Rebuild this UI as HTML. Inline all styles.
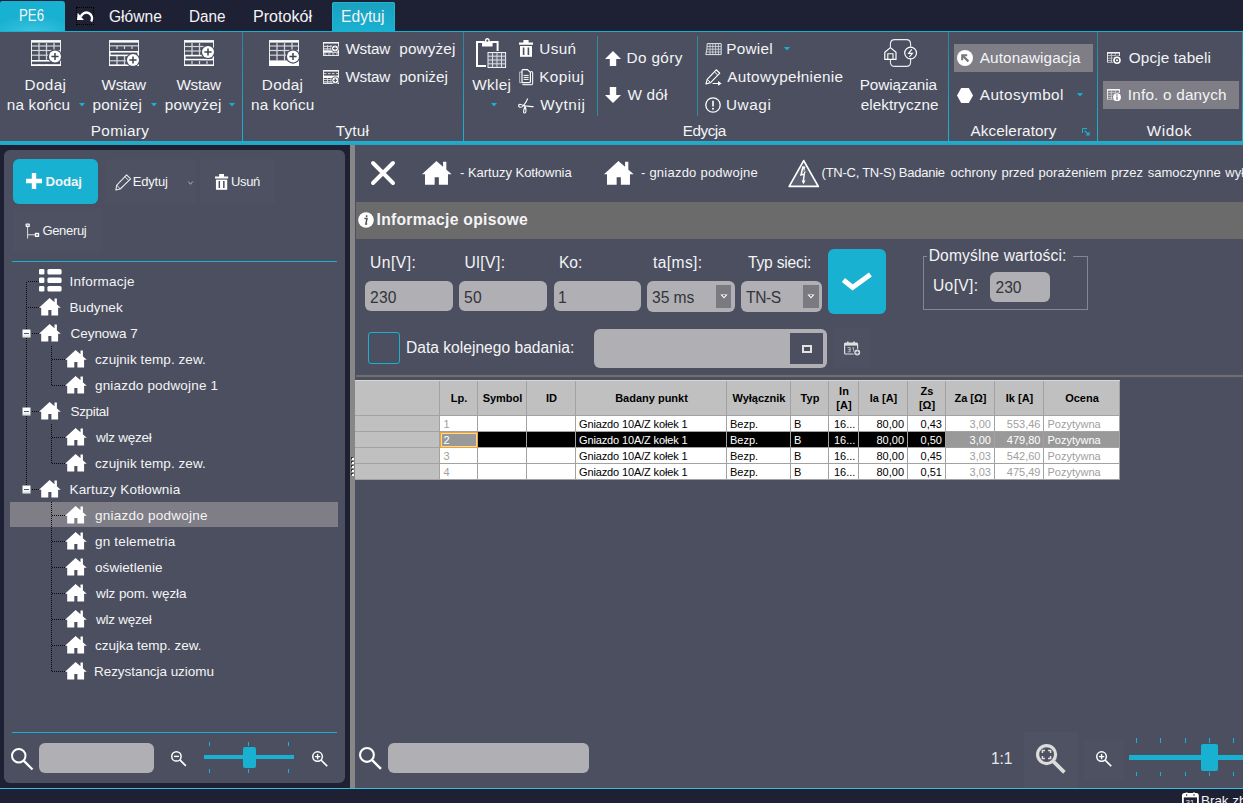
<!DOCTYPE html>
<html lang="pl"><head><meta charset="utf-8"><title>PE6</title>
<style>
html,body{margin:0;padding:0;background:#1d2133;}
body{width:1243px;height:803px;overflow:hidden;font-family:"Liberation Sans",sans-serif;}
#app{position:relative;width:1243px;height:803px;overflow:hidden;background:#1d2133;}
#app div,#app span.t,#app svg{position:absolute;}
#app svg{overflow:visible;}
span.t{white-space:pre;line-height:1;}

</style></head>
<body>
<div id="app">
<div style="left:0;top:1px;width:65px;height:31px;border-radius:2px 3px 0 0;background:radial-gradient(ellipse 40px 16px at 50% 100%,#3cc3df 0%,#19b1d1 100%);"></div>
<span class="t" style="left:19.26px;top:8px;font-size:15.7px;color:#f4f4f6;transform:scaleX(0.8434);transform-origin:0 0;">PE6</span>
<div style="left:76px;top:7px;width:16px;height:16px;border:1px dotted #000;"></div>
<svg style="left:76px;top:10px" width="18" height="12" viewBox="0 0 18 12"><path d="M15.2 11.5 A5.8 5.8 0 1 0 4.8 6.6" fill="none" stroke="#fff" stroke-width="2.4"/><path d="M1.7 2.8 L1 10.1 L7.9 10.1 Z" fill="#fff"/></svg>
<span class="t" style="left:108.8px;top:9px;font-size:15.8px;color:#f4f4f6;transform:scaleX(0.9856);transform-origin:0 0;">Główne</span>
<span class="t" style="left:189.03px;top:9px;font-size:15.8px;color:#f4f4f6;transform:scaleX(0.9681);transform-origin:0 0;">Dane</span>
<span class="t" style="left:252.98px;top:9px;font-size:15.8px;color:#f4f4f6;transform:scaleX(1.0184);transform-origin:0 0;">Protokół</span>
<div style="left:332px;top:2px;width:63px;height:30px;border-radius:2.5px 2.5px 0 0;background:linear-gradient(#1b9fbe,#1aa9c9 50%,#19b1d1);box-shadow:inset 1px 1px 0 #22b4d3,inset -1px 0 0 #22b4d3;"></div>
<span class="t" style="left:340.81px;top:9px;font-size:15.8px;color:#f4f4f6;transform:scaleX(0.9906);transform-origin:0 0;">Edytuj</span>
<div style="left:0px;top:31px;width:1243px;height:1px;background:#19b1d1;"></div>
<div style="left:0px;top:32px;width:1243px;height:109px;background:#4b4f5f;"></div>
<div style="left:0px;top:141px;width:1243px;height:4px;background:linear-gradient(#1ab3d4,#2a9fba);"></div>
<div style="left:242px;top:32px;width:1px;height:109px;background:linear-gradient(#2b849d,#19b1d1 95%);"></div>
<div style="left:463px;top:32px;width:1px;height:109px;background:linear-gradient(#2b849d,#19b1d1 95%);"></div>
<div style="left:948px;top:32px;width:1px;height:109px;background:linear-gradient(#2b849d,#19b1d1 95%);"></div>
<div style="left:1097px;top:32px;width:1px;height:109px;background:linear-gradient(#2b849d,#19b1d1 95%);"></div>
<div style="left:1242px;top:32px;width:1px;height:109px;background:linear-gradient(#2b849d,#19b1d1 95%);"></div>
<div style="left:597px;top:36px;width:1px;height:80px;background:#2f8ba3;"></div>
<div style="left:697px;top:36px;width:1px;height:80px;background:#2f8ba3;"></div>
<svg style="left:31px;top:40px" width="30" height="26" viewBox="0 0 30 26"><rect x="0" y="0" width="30" height="2.6" fill="#fff"/><rect x="0.5" y="0.5" width="29" height="25" fill="none" stroke="#eee" stroke-width="1"/><path d="M8 3 V20.5" stroke="#d4d5da" stroke-width="1.3"/><path d="M15.5 3 V20.5" stroke="#d4d5da" stroke-width="1.3"/><path d="M23 3 V20.5" stroke="#d4d5da" stroke-width="1.3"/><path d="M1 6 H29" stroke="#d4d5da" stroke-width="1.2"/><path d="M1 10.5 H29" stroke="#d4d5da" stroke-width="1.2"/><path d="M1 15.2 H29" stroke="#d4d5da" stroke-width="1.2"/><rect x="0" y="20" width="30" height="1.6" fill="#fff"/><rect x="0" y="24.2" width="30" height="1.8" fill="#fff"/><path d="M8 24 V26" stroke="#fff" stroke-width="1"/><path d="M15.5 24 V26" stroke="#fff" stroke-width="1"/><circle cx="24" cy="16.5" r="7.2" fill="#4b4f5f"/><circle cx="24" cy="16.5" r="6" fill="#fff"/><path d="M20.4 16.5 H27.6 M24 12.9 V20.1" stroke="#3f4352" stroke-width="1.5"/></svg>
<span class="t" style="left:24.6px;top:77px;font-size:15.3px;color:#f4f4f6;letter-spacing:0.357px;">Dodaj</span>
<span class="t" style="left:6.8px;top:96.6px;font-size:15.3px;color:#f4f4f6;letter-spacing:0.173px;">na końcu</span>
<svg style="left:79px;top:103px" width="6" height="4" viewBox="0 0 6 4"><path d="M0 0 H6 L3 3.4 Z" fill="#19b1d1"/></svg>
<svg style="left:109px;top:40px" width="30" height="26" viewBox="0 0 30 26"><rect x="0" y="0" width="30" height="2.6" fill="#fff"/><rect x="0.5" y="0.5" width="29" height="25" fill="none" stroke="#eee" stroke-width="1"/><path d="M1 5.8 H29" stroke="#d4d5da" stroke-width="1.2"/><path d="M8 6 V9" stroke="#d4d5da" stroke-width="1.2"/><path d="M15.5 6 V9" stroke="#d4d5da" stroke-width="1.2"/><path d="M23 6 V9" stroke="#d4d5da" stroke-width="1.2"/><rect x="0.8" y="11.8" width="28.4" height="3.6" fill="none" stroke="#fff" stroke-width="1.6"/><path d="M8 16 V25" stroke="#d4d5da" stroke-width="1.3"/><path d="M15.5 16 V25" stroke="#d4d5da" stroke-width="1.3"/><path d="M1 20.8 H20" stroke="#d4d5da" stroke-width="1.2"/><rect x="0" y="24.4" width="30" height="1.6" fill="#fff"/><circle cx="24" cy="20" r="7.2" fill="#4b4f5f"/><circle cx="24" cy="20" r="6" fill="#fff"/><path d="M20.4 20 H27.6 M24 16.4 V23.6" stroke="#3f4352" stroke-width="1.5"/></svg>
<span class="t" style="left:101.6px;top:77px;font-size:15.3px;color:#f4f4f6;letter-spacing:-0.365px;">Wstaw</span>
<span class="t" style="left:92.5px;top:96.6px;font-size:15.3px;color:#f4f4f6;letter-spacing:0.152px;">poniżej</span>
<svg style="left:151px;top:103px" width="6" height="4" viewBox="0 0 6 4"><path d="M0 0 H6 L3 3.4 Z" fill="#19b1d1"/></svg>
<svg style="left:184px;top:40px" width="30" height="26" viewBox="0 0 30 26"><rect x="0" y="0" width="30" height="2.6" fill="#fff"/><rect x="0.5" y="0.5" width="29" height="25" fill="none" stroke="#eee" stroke-width="1"/><path d="M8 3 V15" stroke="#d4d5da" stroke-width="1.3"/><path d="M15.5 3 V15" stroke="#d4d5da" stroke-width="1.3"/><path d="M1 6.5 H20" stroke="#d4d5da" stroke-width="1.2"/><path d="M1 11 H20" stroke="#d4d5da" stroke-width="1.2"/><rect x="0.8" y="15.6" width="28.4" height="4" fill="none" stroke="#fff" stroke-width="1.6"/><path d="M8 21 V24" stroke="#d4d5da" stroke-width="1.2"/><path d="M15.5 21 V24" stroke="#d4d5da" stroke-width="1.2"/><path d="M23 21 V24" stroke="#d4d5da" stroke-width="1.2"/><rect x="0" y="24.4" width="30" height="1.6" fill="#fff"/><circle cx="24" cy="12" r="7.2" fill="#4b4f5f"/><circle cx="24" cy="12" r="6" fill="#fff"/><path d="M20.4 12 H27.6 M24 8.4 V15.6" stroke="#3f4352" stroke-width="1.5"/></svg>
<span class="t" style="left:176.5px;top:77px;font-size:15.3px;color:#f4f4f6;letter-spacing:-0.34px;">Wstaw</span>
<span class="t" style="left:164.8px;top:96.6px;font-size:15.3px;color:#f4f4f6;letter-spacing:0.222px;">powyżej</span>
<svg style="left:229px;top:103px" width="6" height="4" viewBox="0 0 6 4"><path d="M0 0 H6 L3 3.4 Z" fill="#19b1d1"/></svg>
<span class="t" style="left:90.8px;top:123px;font-size:15.3px;color:#f4f4f6;letter-spacing:0.34px;">Pomiary</span>
<svg style="left:268.5px;top:40px" width="30" height="26" viewBox="0 0 30 26"><rect x="0" y="0" width="30" height="2.6" fill="#fff"/><rect x="0.5" y="0.5" width="29" height="25" fill="none" stroke="#eee" stroke-width="1"/><path d="M8 3 V20.5" stroke="#d4d5da" stroke-width="1.3"/><path d="M15.5 3 V20.5" stroke="#d4d5da" stroke-width="1.3"/><path d="M23 3 V20.5" stroke="#d4d5da" stroke-width="1.3"/><path d="M1 6 H29" stroke="#d4d5da" stroke-width="1.2"/><path d="M1 10.5 H29" stroke="#d4d5da" stroke-width="1.2"/><path d="M1 15.2 H29" stroke="#d4d5da" stroke-width="1.2"/><rect x="0" y="20.4" width="30" height="5.6" fill="#fff"/><circle cx="24" cy="16.5" r="7.2" fill="#4b4f5f"/><circle cx="24" cy="16.5" r="6" fill="#fff"/><path d="M20.4 16.5 H27.6 M24 12.9 V20.1" stroke="#3f4352" stroke-width="1.5"/></svg>
<span class="t" style="left:261.8px;top:77px;font-size:15.3px;color:#f4f4f6;letter-spacing:0.307px;">Dodaj</span>
<span class="t" style="left:251px;top:96.6px;font-size:15.3px;color:#f4f4f6;letter-spacing:0.159px;">na końcu</span>
<svg style="left:323px;top:42px" width="16" height="14" viewBox="0 0 16 14"><rect x="0.5" y="0.5" width="15" height="13" fill="none" stroke="#e8e8ea" stroke-width="1"/><rect x="0" y="0" width="16" height="1.6" fill="#f4f4f4"/><path d="M1 4.3 H10 M1 6.8 H10" stroke="#d4d5da" stroke-width="1.2"/><path d="M4.5 3 V8 M8 3 V8" stroke="#d4d5da" stroke-width="0.9"/><rect x="0" y="8.3" width="16" height="2.4" fill="#fff"/><path d="M1 12 H15" stroke="#d4d5da" stroke-width="1" stroke-dasharray="2.5 1.5"/><circle cx="12" cy="6.4" r="3.7" fill="#4b4f5f"/><circle cx="12" cy="6.4" r="3" fill="#fff"/><path d="M10.1 6.4 H13.9 M12 4.5 V8.3" stroke="#3f4352" stroke-width="1"/></svg>
<span class="t" style="left:345.4px;top:41.2px;font-size:15.3px;color:#f4f4f6;letter-spacing:-0.265px;">Wstaw</span>
<span class="t" style="left:399.3px;top:41.2px;font-size:15.3px;color:#f4f4f6;letter-spacing:0.139px;">powyżej</span>
<svg style="left:323px;top:70px" width="16" height="14" viewBox="0 0 16 14"><rect x="0.5" y="0.5" width="15" height="13" fill="none" stroke="#e8e8ea" stroke-width="1"/><rect x="0" y="0" width="16" height="1.6" fill="#f4f4f4"/><path d="M1 3.6 H15" stroke="#d4d5da" stroke-width="1" stroke-dasharray="2.5 1.5"/><rect x="0" y="5.6" width="16" height="2.4" fill="#fff"/><path d="M1 9.5 H10 M1 11.8 H10" stroke="#d4d5da" stroke-width="1.2"/><path d="M4.5 8 V13 M8 8 V13" stroke="#d4d5da" stroke-width="0.9"/><circle cx="12.3" cy="10.3" r="3.7" fill="#4b4f5f"/><circle cx="12.3" cy="10.3" r="3" fill="#fff"/><path d="M10.4 10.3 H14.200000000000001 M12.3 8.4 V12.200000000000001" stroke="#3f4352" stroke-width="1"/></svg>
<span class="t" style="left:345.4px;top:69.4px;font-size:15.3px;color:#f4f4f6;letter-spacing:-0.265px;">Wstaw</span>
<span class="t" style="left:399.3px;top:69.4px;font-size:15.3px;color:#f4f4f6;letter-spacing:0.036px;">poniżej</span>
<span class="t" style="left:335.8px;top:123px;font-size:15.3px;color:#f4f4f6;letter-spacing:0.196px;">Tytuł</span>
<svg style="left:476px;top:37px" width="31" height="31" viewBox="0 0 31 31">
<path d="M8 5 H1 V29 H10" fill="none" stroke="#fff" stroke-width="2"/>
<path d="M15 5 H21.6 V14" fill="none" stroke="#fff" stroke-width="2"/>
<path d="M6 4.2 H9 A2.4 2.4 0 1 1 13.6 4.2 H16.6 V9.4 H6 Z" fill="#fff"/><circle cx="11.3" cy="3.6" r="1.1" fill="#4b4f5f"/>
<rect x="12" y="15.5" width="17.6" height="15" fill="#63677a" stroke="#f2f2f2" stroke-width="1"/>
<path d="M16.5 15.5 V30.5 M21 15.5 V30.5 M25.5 15.5 V30.5 M12 19.2 H30 M12 23 H30 M12 26.8 H30" stroke="#dcdde2" stroke-width="1"/>
</svg>
<span class="t" style="left:472.2px;top:77px;font-size:15.3px;color:#f4f4f6;letter-spacing:0.348px;">Wklej</span>
<svg style="left:491px;top:103px" width="6" height="4" viewBox="0 0 6 4"><path d="M0 0 H6 L3 3.4 Z" fill="#19b1d1"/></svg>
<svg style="left:519px;top:40.4px" width="14.0" height="17.0" viewBox="0 0 14 17">
<path d="M4.4 0 H9.6 V2.6 H14 V4.8 H0 V2.6 H4.4 Z" fill="#fff"/>
<path d="M1 6 H13 V16.8 H1 Z" fill="#fff"/>
<path d="M4.6 7.4 V15 M9.4 7.4 V15" stroke="#4b4f5f" stroke-width="1.6"/>
</svg>
<span class="t" style="left:539.2px;top:41.2px;font-size:15.3px;color:#f4f4f6;letter-spacing:0.396px;">Usuń</span>
<svg style="left:519px;top:69px" width="15" height="17" viewBox="0 0 15 17">
<path d="M3.2 3.2 H1 Q0.6 3.2 0.6 3.8 V13 Q0.6 13.6 1.2 13.6 H3" fill="none" stroke="#a9aab3" stroke-width="1.2"/>
<path d="M11.4 2.6 H12.6 Q13.6 2.6 13.6 3.6 V14.4 Q13.6 15.6 12.6 15.6 H4.6 Q3.8 15.6 3.6 14.8" fill="none" stroke="#e8e8ec" stroke-width="1.2"/>
<path d="M3 1.6 Q3 0.6 4 0.6 H8.4 L11.4 3.4 V12.6 Q11.4 13.6 10.4 13.6 H4 Q3 13.6 3 12.6 Z" fill="none" stroke="#fff" stroke-width="1.2"/>
<path d="M4.6 6.4 H9.6 M4.6 8.4 H9.6 M4.6 10.4 H9.6" stroke="#fff" stroke-width="1"/>
</svg>
<span class="t" style="left:539.2px;top:69.4px;font-size:15.3px;color:#f4f4f6;letter-spacing:0.453px;">Kopiuj</span>
<svg style="left:518px;top:97.5px" width="16" height="16" viewBox="0 0 16 16">
<path d="M15.6 8.6 C11 8.2 8 8.4 5.6 7.6 C3.6 6.6 1.2 5.6 0.6 7.4 C0.2 9.2 2.6 9.8 4.4 8.6 C6.4 7 8.4 3.6 9.8 0.6" fill="none" stroke="#fff" stroke-width="1.1"/>
<path d="M7.2 7.8 C6.4 10 5 12.6 5.6 14.4 C6.4 15.8 8 14.8 8 12.8 C8 10.8 7.4 9.2 7 8" fill="none" stroke="#fff" stroke-width="1.1"/>
</svg>
<span class="t" style="left:540.2px;top:97px;font-size:15.3px;color:#f4f4f6;letter-spacing:0.657px;">Wytnij</span>
<svg style="left:605px;top:50.5px" width="16" height="15" viewBox="0 0 16 15"><path d="M8 0 L16 8 H11.2 V15 H4.8 V8 H0 Z" fill="#fff"/></svg>
<span class="t" style="left:626.5px;top:49.8px;font-size:15.3px;color:#f4f4f6;letter-spacing:0.381px;">Do góry</span>
<svg style="left:605px;top:87px" width="16" height="16" viewBox="0 0 16 16"><path d="M8 16 L16 8 H11.2 V0 H4.8 V8 H0 Z" fill="#fff"/></svg>
<span class="t" style="left:627.5px;top:86.8px;font-size:15.3px;color:#f4f4f6;letter-spacing:0.197px;">W dół</span>
<svg style="left:704.5px;top:42.5px" width="17" height="13" viewBox="0 0 17 13">
<path d="M2.2 0.6 H16.2 V11.6 H0.8 Q2.4 6 2.2 0.6 Z" fill="none" stroke="#e6e6ea" stroke-width="1"/>
<path d="M5 0.6 V11.6 M7.8 0.6 V11.6 M10.6 0.6 V11.6 M13.4 0.6 V11.6 M2 3.4 H16 M1.8 6.2 H16 M1.4 9 H16" stroke="#d0d1d7" stroke-width="0.9"/>
</svg>
<span class="t" style="left:726.2px;top:41.2px;font-size:15.3px;color:#f4f4f6;letter-spacing:0.267px;">Powiel</span>
<svg style="left:784px;top:47px" width="6" height="4" viewBox="0 0 6 4"><path d="M0 0 H6 L3 3.4 Z" fill="#19b1d1"/></svg>
<svg style="left:704.5px;top:69px" width="17" height="17" viewBox="0 0 17 17">
<path d="M11.2 0.8 L14.8 4.2 L5.6 13.6 L1 15 L2.2 10.4 Z" fill="none" stroke="#fff" stroke-width="1.2" stroke-linejoin="round"/>
<path d="M9.4 2.8 L12.8 6.2 M2.2 10.4 L5.6 13.6" stroke="#fff" stroke-width="1"/>
<path d="M7.6 14 H13 V12 L16.6 14.4 L13 16.8 V14.9 H7.6 Z" fill="#fff"/>
</svg>
<span class="t" style="left:727.2px;top:69.4px;font-size:15.3px;color:#f4f4f6;letter-spacing:0.322px;">Autowypełnienie</span>
<svg style="left:705px;top:97px" width="16" height="16" viewBox="0 0 16 16">
<circle cx="8" cy="8" r="7.2" fill="none" stroke="#fff" stroke-width="1.3"/>
<path d="M8 3.8 V9.4" stroke="#fff" stroke-width="1.6"/><circle cx="8" cy="11.8" r="1" fill="#fff"/>
</svg>
<span class="t" style="left:726px;top:97px;font-size:15.3px;color:#f4f4f6;letter-spacing:0.571px;">Uwagi</span>
<svg style="left:883.5px;top:38.5px" width="34" height="28" viewBox="0 0 34 28">
<path d="M6.4 8.6 V5 Q6.4 0.6 10.8 0.6 H22.4 Q26.6 0.6 26.6 5 V7.8 M26.6 20 V23 Q26.6 27.4 22.4 27.4 H10.8 Q6.4 27.4 6.4 23 V21" fill="none" stroke="#eeeef2" stroke-width="1.1"/>
<path d="M0.8 20.4 V13.2 L6.4 8.6 L12 13.2 V20.4 Z" fill="none" stroke="#fff" stroke-width="1.2" stroke-linejoin="round"/>
<path d="M3.8 20.4 V14.8 H9 V20.4" fill="none" stroke="#fff" stroke-width="1.1"/>
<circle cx="26.6" cy="14" r="5.9" fill="none" stroke="#fff" stroke-width="1.2"/>
<path d="M27.8 10.4 L24.6 14.4 H28.4 L25.4 17.8" fill="none" stroke="#fff" stroke-width="1.1"/>
</svg>
<span class="t" style="left:859.7px;top:77px;font-size:15.3px;color:#f4f4f6;letter-spacing:-0.092px;">Powiązania</span>
<span class="t" style="left:860.7px;top:96.6px;font-size:15.3px;color:#f4f4f6;letter-spacing:0.043px;">elektryczne</span>
<span class="t" style="left:682.8px;top:123px;font-size:15.3px;color:#f4f4f6;letter-spacing:-0.483px;">Edycja</span>
<div style="left:954px;top:44px;width:139px;height:28px;background:#7f7e86;"></div>
<svg style="left:957px;top:50px" width="16" height="16" viewBox="0 0 16 16">
<circle cx="8" cy="8" r="8" fill="#fff"/>
<path d="M11.4 11.4 L6 6" fill="none" stroke="#77767e" stroke-width="2.2"/><path d="M4.2 4.2 H10.2 V6.2 H6.2 V10.2 H4.2 Z" fill="#77767e"/>
</svg>
<span class="t" style="left:979.8px;top:50px;font-size:15.3px;color:#f4f4f6;letter-spacing:0.101px;">Autonawigacja</span>
<svg style="left:957px;top:87.5px" width="16" height="15" viewBox="0 0 16 15"><path d="M0 7.5 L4.2 0 H11.8 L16 7.5 L11.8 15 H4.2 Z" fill="#fff"/></svg>
<span class="t" style="left:979.8px;top:86.8px;font-size:15.3px;color:#f4f4f6;letter-spacing:0.409px;">Autosymbol</span>
<svg style="left:1077px;top:93px" width="6" height="4" viewBox="0 0 6 4"><path d="M0 0 H6 L3 3.4 Z" fill="#19b1d1"/></svg>
<span class="t" style="left:970.5px;top:123px;font-size:15.3px;color:#f4f4f6;letter-spacing:0.085px;">Akceleratory</span>
<svg style="left:1082px;top:127.5px" width="8" height="8" viewBox="0 0 8 8"><path d="M0.5 5 V0.5 H5" fill="none" stroke="#19b1d1" stroke-width="1"/><path d="M2.6 2.6 L6 6" stroke="#19b1d1" stroke-width="1.2"/><path d="M7.6 3.6 V7.6 H3.6 Z" fill="#19b1d1"/></svg>
<svg style="left:1107px;top:52px" width="15" height="13" viewBox="0 0 15 13"><path d="M0.5 10.4 V0.6 H12.5 V4" fill="none" stroke="#e6e6ea" stroke-width="1"/><path d="M0 0.9 H13" stroke="#fff" stroke-width="1.3"/><path d="M4.4 1 V10.4 M8.4 1 V6 M0.5 3.6 H12.5 M0.5 6.2 H8 M0.5 8.6 H6 M0.5 10.4 H6" stroke="#d0d1d7" stroke-width="0.8"/>
<circle cx="10" cy="8.2" r="4.6" fill="#4b4f5f"/><circle cx="10" cy="8.2" r="3" fill="none" stroke="#fff" stroke-width="1.6"/><circle cx="10" cy="8.2" r="1" fill="#fff"/></svg>
<span class="t" style="left:1128.8px;top:50px;font-size:15.3px;color:#f4f4f6;letter-spacing:0.12px;">Opcje tabeli</span>
<div style="left:1103px;top:81px;width:136px;height:28px;background:#7f7e86;"></div>
<svg style="left:1107px;top:89px" width="15" height="13" viewBox="0 0 15 13"><path d="M0.5 10.4 V0.6 H12.5 V4" fill="none" stroke="#e6e6ea" stroke-width="1"/><path d="M0 0.9 H13" stroke="#fff" stroke-width="1.3"/><path d="M4.4 1 V10.4 M8.4 1 V6 M0.5 3.6 H12.5 M0.5 6.2 H8 M0.5 8.6 H6 M0.5 10.4 H6" stroke="#d0d1d7" stroke-width="0.8"/>
<circle cx="10" cy="8.2" r="4.7" fill="#7f7e86"/><circle cx="10" cy="8.2" r="3.9" fill="#fff"/><path d="M10 7.6 V10.8" stroke="#77767e" stroke-width="1.3"/><circle cx="10" cy="6" r="0.8" fill="#77767e"/></svg>
<span class="t" style="left:1127.8px;top:86.8px;font-size:15.3px;color:#f4f4f6;letter-spacing:0.2px;">Info. o danych</span>
<span class="t" style="left:1146.8px;top:123px;font-size:15.3px;color:#f4f4f6;letter-spacing:0.537px;">Widok</span>
<div style="left:4px;top:150px;width:341px;height:633px;background:#4b4f5f;border-radius:6px;"></div>
<div style="left:13px;top:159px;width:85px;height:45px;background:#19b1d1;border-radius:6px;"></div>
<svg style="left:26px;top:173px" width="16" height="16" viewBox="0 0 16 16"><path d="M5.8 0 H10.2 V5.8 H16 V10.2 H10.2 V16 H5.8 V10.2 H0 V5.8 H5.8 Z" fill="#fff"/></svg>
<span class="t" style="left:45.5px;top:175px;font-size:13.2px;color:#f4f4f6;font-weight:700;letter-spacing:-0.044px;">Dodaj</span>
<div style="left:105px;top:159px;width:91px;height:45px;background:#4d5161;"></div>
<svg style="left:115px;top:173.5px" width="17" height="17" viewBox="0 0 17 17">
<path d="M11.6 0.8 L15.6 4.8 L5.2 15 L0.8 16 L1.8 11.2 Z" fill="none" stroke="#e8e8ec" stroke-width="1.1" stroke-linejoin="round"/>
<path d="M9.8 2.6 L13.8 6.6 M1.8 11.2 L5.2 15" stroke="#e8e8ec" stroke-width="1"/>
</svg>
<span class="t" style="left:132.8px;top:175px;font-size:13px;color:#f4f4f6;letter-spacing:-0.21px;">Edytuj</span>
<svg style="left:187.5px;top:180.5px" width="5" height="4" viewBox="0 0 5 4"><path d="M0.3 0.5 L2.5 3.3 L4.7 0.5" fill="none" stroke="#b9bac3" stroke-width="0.9"/></svg>
<div style="left:200px;top:159px;width:75px;height:45px;background:#4d5161;"></div>
<svg style="left:214.5px;top:173.5px" width="13.16" height="15.979999999999999" viewBox="0 0 14 17">
<path d="M4.4 0 H9.6 V2.6 H14 V4.8 H0 V2.6 H4.4 Z" fill="#fff"/>
<path d="M1 6 H13 V16.8 H1 Z" fill="#fff"/>
<path d="M4.6 7.4 V15 M9.4 7.4 V15" stroke="#4b4f5f" stroke-width="1.6"/>
</svg>
<span class="t" style="left:231px;top:175px;font-size:13px;color:#f4f4f6;letter-spacing:-0.376px;">Usuń</span>
<div style="left:13px;top:209px;width:89px;height:43px;background:#4d5161;"></div>
<svg style="left:25px;top:223px" width="15" height="16" viewBox="0 0 15 16">
<path d="M2.6 3.6 V15.6 M2.6 11.8 H10" stroke="#dcdde2" stroke-width="1"/>
<rect x="0.6" y="0.4" width="4.2" height="3.6" rx="0.8" fill="#fff"/><path d="M1.6 2.2 H3.8" stroke="#4b4f5f" stroke-width="0.8"/>
<rect x="9.8" y="9.8" width="4.4" height="4.2" rx="0.8" fill="#fff"/><rect x="11.2" y="11.2" width="1.6" height="1.4" fill="#4b4f5f"/>
</svg>
<span class="t" style="left:42.4px;top:224.3px;font-size:13px;color:#f4f4f6;letter-spacing:-0.327px;">Generuj</span>
<div style="left:12px;top:261px;width:325px;height:1px;background:#19b1d1;"></div>
<div style="left:10px;top:502px;width:328px;height:25px;background:#7f7e86;"></div>
<div style="left:26px;top:282px;width:1px;height:207px;background:transparent;background:repeating-linear-gradient(180deg,#0a0a0a 0 1px,transparent 1px 2px);"></div>
<div style="left:51px;top:346px;width:1px;height:40px;background:transparent;background:repeating-linear-gradient(180deg,#0a0a0a 0 1px,transparent 1px 2px);"></div>
<div style="left:51px;top:424px;width:1px;height:40px;background:transparent;background:repeating-linear-gradient(180deg,#0a0a0a 0 1px,transparent 1px 2px);"></div>
<div style="left:51px;top:502px;width:1px;height:170px;background:transparent;background:repeating-linear-gradient(180deg,#0a0a0a 0 1px,transparent 1px 2px);"></div>
<div style="left:28px;top:281px;width:11px;height:1px;background:transparent;background:repeating-linear-gradient(90deg,#0a0a0a 0 1px,transparent 1px 2px);"></div>
<svg style="left:38.7px;top:268.8px" width="22.6" height="22.6" viewBox="0 0 22.6 22.6"><rect x="0" y="0" width="5.4" height="5.6" rx="1.3" fill="#fff"/><rect x="8.4" y="0" width="14.2" height="5.6" rx="1.6" fill="#fff"/><rect x="0" y="8.5" width="5.4" height="5.6" rx="1.3" fill="#fff"/><rect x="8.4" y="8.5" width="14.2" height="5.6" rx="1.6" fill="#fff"/><rect x="0" y="17" width="5.4" height="5.6" rx="1.3" fill="#fff"/><rect x="8.4" y="17" width="14.2" height="5.6" rx="1.6" fill="#fff"/></svg>
<span class="t" style="left:69.5px;top:275px;font-size:13.5px;color:#f4f4f6;letter-spacing:0.22px;">Informacje</span>
<div style="left:28px;top:307px;width:11px;height:1px;background:transparent;background:repeating-linear-gradient(90deg,#0a0a0a 0 1px,transparent 1px 2px);"></div>
<svg style="left:39.1px;top:297.8px" width="21.8" height="17.5" viewBox="0 0 21.8 17.5"><path d="M10.6 0 L21.8 9.7 H19.1 V17.5 H12.4 V12 H9.3 V17.5 H2.2 V9.7 H0 Z M15.5 0.6 H17.9 V6.8 L15.5 4.4 Z" fill="#fff"/></svg>
<span class="t" style="left:69.5px;top:301px;font-size:13.5px;color:#f4f4f6;letter-spacing:0.117px;">Budynek</span>
<div style="left:28px;top:333px;width:11px;height:1px;background:transparent;background:repeating-linear-gradient(90deg,#0a0a0a 0 1px,transparent 1px 2px);"></div>
<svg style="left:39.1px;top:323.8px" width="21.8" height="17.5" viewBox="0 0 21.8 17.5"><path d="M10.6 0 L21.8 9.7 H19.1 V17.5 H12.4 V12 H9.3 V17.5 H2.2 V9.7 H0 Z M15.5 0.6 H17.9 V6.8 L15.5 4.4 Z" fill="#fff"/></svg>
<div style="left:22px;top:329px;width:7px;height:7px;border:1px solid #a2a2a2;border-radius:1px;background:linear-gradient(180deg,#fff 55%,#dcdad6 100%);"></div>
<div style="left:24px;top:333px;width:5px;height:1px;background:#2b5fa8;"></div>
<span class="t" style="left:70.5px;top:327px;font-size:13.5px;color:#f4f4f6;letter-spacing:-0.042px;">Ceynowa 7</span>
<div style="left:52px;top:359px;width:13px;height:1px;background:transparent;background:repeating-linear-gradient(90deg,#0a0a0a 0 1px,transparent 1px 2px);"></div>
<svg style="left:64.6px;top:349.8px" width="21.8" height="17.5" viewBox="0 0 21.8 17.5"><path d="M10.6 0 L21.8 9.7 H19.1 V17.5 H12.4 V12 H9.3 V17.5 H2.2 V9.7 H0 Z M15.5 0.6 H17.9 V6.8 L15.5 4.4 Z" fill="#fff"/></svg>
<span class="t" style="left:95.0px;top:353px;font-size:13.5px;color:#f4f4f6;letter-spacing:0.071px;">czujnik temp. zew.</span>
<div style="left:52px;top:385px;width:13px;height:1px;background:transparent;background:repeating-linear-gradient(90deg,#0a0a0a 0 1px,transparent 1px 2px);"></div>
<svg style="left:64.6px;top:375.8px" width="21.8" height="17.5" viewBox="0 0 21.8 17.5"><path d="M10.6 0 L21.8 9.7 H19.1 V17.5 H12.4 V12 H9.3 V17.5 H2.2 V9.7 H0 Z M15.5 0.6 H17.9 V6.8 L15.5 4.4 Z" fill="#fff"/></svg>
<span class="t" style="left:95.0px;top:379px;font-size:13.5px;color:#f4f4f6;letter-spacing:0.171px;">gniazdo podwojne 1</span>
<div style="left:28px;top:411px;width:11px;height:1px;background:transparent;background:repeating-linear-gradient(90deg,#0a0a0a 0 1px,transparent 1px 2px);"></div>
<svg style="left:39.1px;top:401.8px" width="21.8" height="17.5" viewBox="0 0 21.8 17.5"><path d="M10.6 0 L21.8 9.7 H19.1 V17.5 H12.4 V12 H9.3 V17.5 H2.2 V9.7 H0 Z M15.5 0.6 H17.9 V6.8 L15.5 4.4 Z" fill="#fff"/></svg>
<div style="left:22px;top:407px;width:7px;height:7px;border:1px solid #a2a2a2;border-radius:1px;background:linear-gradient(180deg,#fff 55%,#dcdad6 100%);"></div>
<div style="left:24px;top:411px;width:5px;height:1px;background:#2b5fa8;"></div>
<span class="t" style="left:70.5px;top:405px;font-size:13.5px;color:#f4f4f6;letter-spacing:-0.339px;">Szpital</span>
<div style="left:52px;top:437px;width:13px;height:1px;background:transparent;background:repeating-linear-gradient(90deg,#0a0a0a 0 1px,transparent 1px 2px);"></div>
<svg style="left:64.6px;top:427.8px" width="21.8" height="17.5" viewBox="0 0 21.8 17.5"><path d="M10.6 0 L21.8 9.7 H19.1 V17.5 H12.4 V12 H9.3 V17.5 H2.2 V9.7 H0 Z M15.5 0.6 H17.9 V6.8 L15.5 4.4 Z" fill="#fff"/></svg>
<span class="t" style="left:96px;top:431px;font-size:13.5px;color:#f4f4f6;letter-spacing:-0.258px;">wlz węzeł</span>
<div style="left:52px;top:463px;width:13px;height:1px;background:transparent;background:repeating-linear-gradient(90deg,#0a0a0a 0 1px,transparent 1px 2px);"></div>
<svg style="left:64.6px;top:453.8px" width="21.8" height="17.5" viewBox="0 0 21.8 17.5"><path d="M10.6 0 L21.8 9.7 H19.1 V17.5 H12.4 V12 H9.3 V17.5 H2.2 V9.7 H0 Z M15.5 0.6 H17.9 V6.8 L15.5 4.4 Z" fill="#fff"/></svg>
<span class="t" style="left:95.0px;top:457px;font-size:13.5px;color:#f4f4f6;letter-spacing:0.071px;">czujnik temp. zew.</span>
<div style="left:28px;top:489px;width:11px;height:1px;background:transparent;background:repeating-linear-gradient(90deg,#0a0a0a 0 1px,transparent 1px 2px);"></div>
<svg style="left:39.1px;top:479.8px" width="21.8" height="17.5" viewBox="0 0 21.8 17.5"><path d="M10.6 0 L21.8 9.7 H19.1 V17.5 H12.4 V12 H9.3 V17.5 H2.2 V9.7 H0 Z M15.5 0.6 H17.9 V6.8 L15.5 4.4 Z" fill="#fff"/></svg>
<div style="left:22px;top:485px;width:7px;height:7px;border:1px solid #a2a2a2;border-radius:1px;background:linear-gradient(180deg,#fff 55%,#dcdad6 100%);"></div>
<div style="left:24px;top:489px;width:5px;height:1px;background:#2b5fa8;"></div>
<span class="t" style="left:69.5px;top:483px;font-size:13.5px;color:#f4f4f6;letter-spacing:0.165px;">Kartuzy Kotłownia</span>
<div style="left:52px;top:515px;width:13px;height:1px;background:transparent;background:repeating-linear-gradient(90deg,#0a0a0a 0 1px,transparent 1px 2px);"></div>
<svg style="left:64.6px;top:505.8px" width="21.8" height="17.5" viewBox="0 0 21.8 17.5"><path d="M10.6 0 L21.8 9.7 H19.1 V17.5 H12.4 V12 H9.3 V17.5 H2.2 V9.7 H0 Z M15.5 0.6 H17.9 V6.8 L15.5 4.4 Z" fill="#fff"/></svg>
<span class="t" style="left:95.0px;top:509px;font-size:13.5px;color:#f4f4f6;letter-spacing:0.244px;">gniazdo podwojne</span>
<div style="left:52px;top:541px;width:13px;height:1px;background:transparent;background:repeating-linear-gradient(90deg,#0a0a0a 0 1px,transparent 1px 2px);"></div>
<svg style="left:64.6px;top:531.8px" width="21.8" height="17.5" viewBox="0 0 21.8 17.5"><path d="M10.6 0 L21.8 9.7 H19.1 V17.5 H12.4 V12 H9.3 V17.5 H2.2 V9.7 H0 Z M15.5 0.6 H17.9 V6.8 L15.5 4.4 Z" fill="#fff"/></svg>
<span class="t" style="left:95.0px;top:535px;font-size:13.5px;color:#f4f4f6;letter-spacing:0.18px;">gn telemetria</span>
<div style="left:52px;top:567px;width:13px;height:1px;background:transparent;background:repeating-linear-gradient(90deg,#0a0a0a 0 1px,transparent 1px 2px);"></div>
<svg style="left:64.6px;top:557.8px" width="21.8" height="17.5" viewBox="0 0 21.8 17.5"><path d="M10.6 0 L21.8 9.7 H19.1 V17.5 H12.4 V12 H9.3 V17.5 H2.2 V9.7 H0 Z M15.5 0.6 H17.9 V6.8 L15.5 4.4 Z" fill="#fff"/></svg>
<span class="t" style="left:95.0px;top:561px;font-size:13.5px;color:#f4f4f6;letter-spacing:0.071px;">oświetlenie</span>
<div style="left:52px;top:593px;width:13px;height:1px;background:transparent;background:repeating-linear-gradient(90deg,#0a0a0a 0 1px,transparent 1px 2px);"></div>
<svg style="left:64.6px;top:583.8px" width="21.8" height="17.5" viewBox="0 0 21.8 17.5"><path d="M10.6 0 L21.8 9.7 H19.1 V17.5 H12.4 V12 H9.3 V17.5 H2.2 V9.7 H0 Z M15.5 0.6 H17.9 V6.8 L15.5 4.4 Z" fill="#fff"/></svg>
<span class="t" style="left:96px;top:587px;font-size:13.5px;color:#f4f4f6;letter-spacing:-0.079px;">wlz pom. węzła</span>
<div style="left:52px;top:619px;width:13px;height:1px;background:transparent;background:repeating-linear-gradient(90deg,#0a0a0a 0 1px,transparent 1px 2px);"></div>
<svg style="left:64.6px;top:609.8px" width="21.8" height="17.5" viewBox="0 0 21.8 17.5"><path d="M10.6 0 L21.8 9.7 H19.1 V17.5 H12.4 V12 H9.3 V17.5 H2.2 V9.7 H0 Z M15.5 0.6 H17.9 V6.8 L15.5 4.4 Z" fill="#fff"/></svg>
<span class="t" style="left:96px;top:613px;font-size:13.5px;color:#f4f4f6;letter-spacing:-0.258px;">wlz węzeł</span>
<div style="left:52px;top:645px;width:13px;height:1px;background:transparent;background:repeating-linear-gradient(90deg,#0a0a0a 0 1px,transparent 1px 2px);"></div>
<svg style="left:64.6px;top:635.8px" width="21.8" height="17.5" viewBox="0 0 21.8 17.5"><path d="M10.6 0 L21.8 9.7 H19.1 V17.5 H12.4 V12 H9.3 V17.5 H2.2 V9.7 H0 Z M15.5 0.6 H17.9 V6.8 L15.5 4.4 Z" fill="#fff"/></svg>
<span class="t" style="left:95.0px;top:639px;font-size:13.5px;color:#f4f4f6;letter-spacing:0.0px;">czujka temp. zew.</span>
<div style="left:52px;top:671px;width:13px;height:1px;background:transparent;background:repeating-linear-gradient(90deg,#0a0a0a 0 1px,transparent 1px 2px);"></div>
<svg style="left:64.6px;top:661.8px" width="21.8" height="17.5" viewBox="0 0 21.8 17.5"><path d="M10.6 0 L21.8 9.7 H19.1 V17.5 H12.4 V12 H9.3 V17.5 H2.2 V9.7 H0 Z M15.5 0.6 H17.9 V6.8 L15.5 4.4 Z" fill="#fff"/></svg>
<span class="t" style="left:94px;top:665px;font-size:13.5px;color:#f4f4f6;letter-spacing:-0.053px;">Rezystancja uziomu</span>
<div style="left:12px;top:732px;width:325px;height:1px;background:#19b1d1;"></div>
<svg style="left:10.5px;top:747.5px" width="22.5" height="22.5" viewBox="0 0 22.5 22.5"><circle cx="7.75" cy="7.75" r="6.75" fill="none" stroke="#fff" stroke-width="2"/><path d="M12.61 12.61 L21.5 21.5" stroke="#fff" stroke-width="2.3" stroke-linecap="butt"/></svg>
<div style="left:39px;top:743px;width:115px;height:30px;background:#b0afb3;border-radius:6px;"></div>
<svg style="left:170.5px;top:750.5px" width="15.6" height="15.6" viewBox="0 0 15.6 15.6"><circle cx="5.43" cy="5.43" r="4.68" fill="none" stroke="#fff" stroke-width="1.5"/><path d="M8.7996 8.7996 L14.85 14.85" stroke="#fff" stroke-width="1.7249999999999999" stroke-linecap="butt"/><path d="M3 5.4 H8" stroke="#fff" stroke-width="1.4"/></svg>
<div style="left:204px;top:755px;width:90px;height:4px;background:#19b1d1;"></div>
<div style="left:209px;top:742px;width:1px;height:4px;background:#19b1d1;"></div>
<div style="left:209px;top:769px;width:1px;height:4px;background:#19b1d1;"></div>
<div style="left:248px;top:742px;width:1px;height:4px;background:#19b1d1;"></div>
<div style="left:248px;top:769px;width:1px;height:4px;background:#19b1d1;"></div>
<div style="left:288px;top:742px;width:1px;height:4px;background:#19b1d1;"></div>
<div style="left:288px;top:769px;width:1px;height:4px;background:#19b1d1;"></div>
<div style="left:243px;top:747px;width:13px;height:21px;background:#19b1d1;border-radius:2px;"></div>
<svg style="left:312px;top:750.5px" width="16" height="16" viewBox="0 0 16 16"><circle cx="5.55" cy="5.55" r="4.8" fill="none" stroke="#fff" stroke-width="1.5"/><path d="M9.006 9.006 L15.25 15.25" stroke="#fff" stroke-width="1.7249999999999999" stroke-linecap="butt"/><path d="M3 5.6 H8.2 M5.6 3 V8.2" stroke="#fff" stroke-width="1.4"/></svg>
<div style="left:350px;top:145px;width:5px;height:643px;background:#878787;"></div>
<div style="left:351px;top:457px;width:2px;height:2px;background:#333;"></div>
<div style="left:352px;top:458px;width:2px;height:2px;background:#fff;"></div>
<div style="left:351px;top:461px;width:2px;height:2px;background:#333;"></div>
<div style="left:352px;top:462px;width:2px;height:2px;background:#fff;"></div>
<div style="left:351px;top:465px;width:2px;height:2px;background:#333;"></div>
<div style="left:352px;top:466px;width:2px;height:2px;background:#fff;"></div>
<div style="left:351px;top:469px;width:2px;height:2px;background:#333;"></div>
<div style="left:352px;top:470px;width:2px;height:2px;background:#fff;"></div>
<div style="left:351px;top:473px;width:2px;height:2px;background:#333;"></div>
<div style="left:352px;top:474px;width:2px;height:2px;background:#fff;"></div>
<div style="left:355px;top:145px;width:888px;height:643px;background:#4b4f5f;"></div>
<svg style="left:371px;top:161px" width="24" height="24" viewBox="0 0 24 24"><path d="M2 2 L22 22 M22 2 L2 22" stroke="#fff" stroke-width="3.9" stroke-linecap="round"/></svg>
<svg style="left:422.3px;top:161.4px" width="29.65" height="23.8" viewBox="0 0 21.8 17.5"><path d="M10.6 0 L21.8 9.7 H19.1 V17.5 H12.4 V12 H9.3 V17.5 H2.2 V9.7 H0 Z M15.5 0.6 H17.9 V6.8 L15.5 4.4 Z" fill="#fff"/></svg>
<span class="t" style="left:460.0px;top:166.4px;font-size:13px;color:#f4f4f6;letter-spacing:-0.015px;">- Kartuzy Kotłownia</span>
<svg style="left:603.6px;top:161.4px" width="29.65" height="23.8" viewBox="0 0 21.8 17.5"><path d="M10.6 0 L21.8 9.7 H19.1 V17.5 H12.4 V12 H9.3 V17.5 H2.2 V9.7 H0 Z M15.5 0.6 H17.9 V6.8 L15.5 4.4 Z" fill="#fff"/></svg>
<span class="t" style="left:641.0px;top:166.4px;font-size:13px;color:#f4f4f6;letter-spacing:0.234px;">- gniazdo podwojne</span>
<svg style="left:787.5px;top:159px" width="31.5" height="28.5" viewBox="0 0 31.5 28.5">
<path d="M15.7 1.6 L30.3 27.4 H1.2 Z" fill="#5c6070" stroke="#fff" stroke-width="1.7" stroke-linejoin="round"/>
<path d="M15 7.4 L13 16 L16.2 15 L15.4 22" fill="none" stroke="#fff" stroke-width="1.5"/>
<path d="M13.6 21.4 H17.6 L15.4 25.2 Z" fill="#fff"/>
<path d="M15 7.4 H17.4 L16 13 L18.4 12.2 L16.2 15" fill="#fff"/>
</svg>
<span class="t" style="left:821.6px;top:166.2px;font-size:13px;color:#f4f4f6;letter-spacing:-0.259px;">(TN-C, TN-S) Badanie</span>
<span class="t" style="left:950.5px;top:166.2px;font-size:13px;color:#f4f4f6;word-spacing:1.06px;">ochrony przed porażeniem przez samoczynne wyłączenie</span>
<div style="left:356px;top:202px;width:887px;height:37px;background:#6b6b6b;"></div>
<svg style="left:358px;top:212px" width="16" height="16" viewBox="0 0 16 16"><circle cx="8" cy="8" r="7.8" fill="#fff"/>
<path d="M6.4 6.6 H9 L7.8 12 H9.2 M8.6 3.2 V5" fill="none" stroke="#555" stroke-width="1.5"/></svg>
<span class="t" style="left:376.5px;top:212px;font-size:15.7px;color:#f4f4f6;font-weight:700;letter-spacing:0.281px;">Informacje opisowe</span>
<span class="t" style="left:370px;top:254.5px;font-size:15.6px;color:#f4f4f6;letter-spacing:0.498px;">Un[V]:</span>
<span class="t" style="left:464.5px;top:254.5px;font-size:15.6px;color:#f4f4f6;letter-spacing:0.501px;">Ul[V]:</span>
<span class="t" style="left:559px;top:254.5px;font-size:15.6px;color:#f4f4f6;letter-spacing:-0.037px;">Ko:</span>
<span class="t" style="left:653.0px;top:254.5px;font-size:15.6px;color:#f4f4f6;letter-spacing:0.389px;">ta[ms]:</span>
<span class="t" style="left:748.0px;top:254.5px;font-size:15.6px;color:#f4f4f6;letter-spacing:-0.185px;">Typ sieci:</span>
<div style="left:365px;top:281px;width:88px;height:30px;background:#b0afb3;border-radius:6px;"></div>
<span class="t" style="left:370.0px;top:289.6px;font-size:15.6px;color:#33343a;letter-spacing:0.221px;">230</span>
<div style="left:459px;top:281px;width:88px;height:30px;background:#b0afb3;border-radius:6px;"></div>
<span class="t" style="left:464.0px;top:289.6px;font-size:15.6px;color:#33343a;letter-spacing:0.313px;">50</span>
<div style="left:554px;top:281px;width:87px;height:30px;background:#b0afb3;border-radius:6px;"></div>
<span class="t" style="left:558px;top:289.6px;font-size:15.6px;color:#33343a;">1</span>
<div style="left:647px;top:281px;width:88px;height:31px;background:#b0afb3;border-radius:6px;"></div>
<span class="t" style="left:652.0px;top:290px;font-size:15.6px;color:#33343a;letter-spacing:-0.043px;">35 ms</span>
<div style="left:716px;top:285px;width:15px;height:23px;background:#7b7a80;"></div>
<svg style="left:719.5px;top:294px" width="8" height="5" viewBox="0 0 8 5"><path d="M0.4 0.4 H7.6 L4 4.6 Z" fill="#fff"/><path d="M2.6 1.2 H5.4 L4 2.8 Z" fill="#333"/></svg>
<div style="left:741px;top:281px;width:81px;height:31px;background:#b0afb3;border-radius:6px;"></div>
<span class="t" style="left:746.0px;top:290px;font-size:15.6px;color:#33343a;letter-spacing:-0.397px;">TN-S</span>
<div style="left:803px;top:285px;width:16px;height:23px;background:#7b7a80;"></div>
<svg style="left:807px;top:294px" width="8" height="5" viewBox="0 0 8 5"><path d="M0.4 0.4 H7.6 L4 4.6 Z" fill="#fff"/><path d="M2.6 1.2 H5.4 L4 2.8 Z" fill="#333"/></svg>
<div style="left:828px;top:249px;width:58px;height:65px;background:#19b1d1;border-radius:6px;"></div>
<svg style="left:842px;top:272px" width="30" height="19" viewBox="0 0 30 19"><path d="M1.4 8 L10.6 15.4 L28.4 2.4" fill="none" stroke="#fff" stroke-width="5"/></svg>
<div style="left:923px;top:256px;width:163px;height:52px;border:1px solid #85868f;box-sizing:content-box;"></div>
<div style="left:927px;top:250px;width:146px;height:12px;background:#4b4f5f;"></div>
<span class="t" style="left:928.7px;top:248.2px;font-size:15.6px;color:#f4f4f6;letter-spacing:0.144px;">Domyślne wartości:</span>
<span class="t" style="left:933px;top:278px;font-size:15.6px;color:#f4f4f6;letter-spacing:0.358px;">Uo[V]:</span>
<div style="left:990px;top:272px;width:60px;height:30px;background:#b0afb3;border-radius:6px;"></div>
<span class="t" style="left:995.5px;top:280px;font-size:15.6px;color:#33343a;letter-spacing:-0.029px;">230</span>
<div style="left:368px;top:332px;width:30px;height:30px;border:1px solid #19b1d1;border-radius:3px;"></div>
<span class="t" style="left:406px;top:340px;font-size:15.6px;color:#f4f4f6;letter-spacing:0.006px;">Data kolejnego badania:</span>
<div style="left:594px;top:329px;width:233px;height:39px;background:#b0afb3;border-radius:6px;"></div>
<div style="left:790px;top:333px;width:33px;height:31px;background:#4b4f5f;"></div>
<div style="left:802px;top:344.5px;width:6px;height:4px;border:2px solid #e2e2e2;"></div>
<div style="left:833px;top:328px;width:38px;height:39px;background:#4d5161;"></div>
<svg style="left:844px;top:340.5px" width="18" height="16" viewBox="0 0 18 16">
<rect x="0.6" y="2.2" width="13" height="10.8" rx="1" fill="none" stroke="#dedee2" stroke-width="1.2"/>
<rect x="0.4" y="2" width="13.4" height="2.6" fill="#dedee2"/>
<path d="M3.8 0.4 V3 M10 0.4 V3" stroke="#dedee2" stroke-width="1.6"/>
<path d="M3.6 6.6 H6.2 V8.6 H4.6 H6.2 V10.8 H3.6 M8.2 7.2 L9.6 6.6 V11" fill="none" stroke="#c4c5cc" stroke-width="0.9"/>
<circle cx="13.2" cy="11.6" r="3.8" fill="#4b4f5f"/><circle cx="13.2" cy="11.6" r="3" fill="#d6d6da"/>
<path d="M11.6 11.6 H14.8 M13.2 10 V13.2" stroke="#4b4f5f" stroke-width="0.9"/>
</svg>
<div style="left:356px;top:375px;width:887px;height:2px;background:#716f6e;"></div>
<div style="left:355px;top:380px;width:765px;height:36px;background:#c0c0c0;"></div>
<div style="left:355px;top:416px;width:85px;height:64px;background:#c0c0c0;"></div>
<div style="left:440px;top:416px;width:680px;height:64px;background:#ffffff;"></div>
<div style="left:478px;top:432px;width:468px;height:16px;background:#000;"></div>
<div style="left:946px;top:432px;width:174px;height:16px;background:#999999;"></div>
<div style="left:440px;top:432px;width:38px;height:16px;background:#999999;"></div>
<div style="left:439px;top:380px;width:1px;height:100px;background:#a2a2a2;"></div>
<div style="left:477px;top:380px;width:1px;height:100px;background:#a2a2a2;"></div>
<div style="left:526px;top:380px;width:1px;height:100px;background:#a2a2a2;"></div>
<div style="left:575px;top:380px;width:1px;height:100px;background:#a2a2a2;"></div>
<div style="left:726px;top:380px;width:1px;height:100px;background:#a2a2a2;"></div>
<div style="left:790px;top:380px;width:1px;height:100px;background:#a2a2a2;"></div>
<div style="left:828px;top:380px;width:1px;height:100px;background:#a2a2a2;"></div>
<div style="left:858px;top:380px;width:1px;height:100px;background:#a2a2a2;"></div>
<div style="left:907px;top:380px;width:1px;height:100px;background:#a2a2a2;"></div>
<div style="left:945px;top:380px;width:1px;height:100px;background:#a2a2a2;"></div>
<div style="left:994px;top:380px;width:1px;height:100px;background:#a2a2a2;"></div>
<div style="left:1043px;top:380px;width:1px;height:100px;background:#a2a2a2;"></div>
<div style="left:1119px;top:380px;width:1px;height:100px;background:#a2a2a2;"></div>
<div style="left:355px;top:415px;width:765px;height:1px;background:#a2a2a2;"></div>
<div style="left:355px;top:431px;width:765px;height:1px;background:#a2a2a2;"></div>
<div style="left:355px;top:447px;width:765px;height:1px;background:#a2a2a2;"></div>
<div style="left:355px;top:463px;width:765px;height:1px;background:#a2a2a2;"></div>
<div style="left:355px;top:479px;width:765px;height:1px;background:#a2a2a2;"></div>
<div style="left:355px;top:380px;width:765px;height:1px;background:#d8d8d8;"></div>
<div style="left:440px;top:432px;width:36px;height:14px;border:1px solid #f0a22e;box-shadow:inset 0 0 0 1px #f6d9a0;"></div>
<span class="t" style="left:450.75px;top:392.5px;font-size:11px;color:#000;font-weight:700;">Lp.</span>
<span class="t" style="left:482.63px;top:392.5px;font-size:11px;color:#000;font-weight:700;">Symbol</span>
<span class="t" style="left:546.0px;top:392.5px;font-size:11px;color:#000;font-weight:700;">ID</span>
<span class="t" style="left:615.13px;top:392.5px;font-size:11px;color:#000;font-weight:700;">Badany punkt</span>
<span class="t" style="left:732.5px;top:392.5px;font-size:11px;color:#000;font-weight:700;">Wyłącznik</span>
<span class="t" style="left:800.62px;top:392.5px;font-size:11px;color:#000;font-weight:700;">Typ</span>
<span class="t" style="left:839.11px;top:385.5px;font-size:11px;color:#000;font-weight:700;">In</span>
<span class="t" style="left:836.36px;top:399.5px;font-size:11px;color:#000;font-weight:700;">[A]</span>
<span class="t" style="left:869.75px;top:392.5px;font-size:11px;color:#000;font-weight:700;">Ia [A]</span>
<span class="t" style="left:920.58px;top:385.5px;font-size:11px;color:#000;font-weight:700;">Zs</span>
<span class="t" style="left:918.92px;top:399.5px;font-size:11px;color:#000;font-weight:700;">[Ω]</span>
<span class="t" style="left:954.48px;top:392.5px;font-size:11px;color:#000;font-weight:700;">Za [Ω]</span>
<span class="t" style="left:1005.75px;top:392.5px;font-size:11px;color:#000;font-weight:700;">Ik [A]</span>
<span class="t" style="left:1065.18px;top:392.5px;font-size:11px;color:#000;font-weight:700;">Ocena</span>
<span class="t" style="left:443.5px;top:418.6px;font-size:11px;color:#a0a0a0;">1</span>
<span class="t" style="left:579.0px;top:418.6px;font-size:11px;color:#000;letter-spacing:-0.129px;">Gniazdo 10A/Z kołek 1</span>
<span class="t" style="left:730.0px;top:418.6px;font-size:11px;color:#000;">Bezp.</span>
<span class="t" style="left:794.0px;top:418.6px;font-size:11px;color:#000;">B</span>
<span class="t" style="left:834.0px;top:418.6px;font-size:11px;color:#000;">16...</span>
<span class="t" style="left:876.47px;top:418.6px;font-size:11px;color:#000;">80,00</span>
<span class="t" style="left:920.58px;top:418.6px;font-size:11px;color:#000;">0,43</span>
<span class="t" style="left:969.58px;top:418.6px;font-size:11px;color:#a0a0a0;">3,00</span>
<span class="t" style="left:1006.84px;top:418.6px;font-size:11px;color:#a0a0a0;">553,46</span>
<span class="t" style="left:1047.5px;top:418.6px;font-size:11px;color:#a0a0a0;">Pozytywna</span>
<span class="t" style="left:443.5px;top:434.6px;font-size:11px;color:#fff;">2</span>
<span class="t" style="left:579.0px;top:434.6px;font-size:11px;color:#fff;letter-spacing:-0.129px;">Gniazdo 10A/Z kołek 1</span>
<span class="t" style="left:730.0px;top:434.6px;font-size:11px;color:#fff;">Bezp.</span>
<span class="t" style="left:794.0px;top:434.6px;font-size:11px;color:#fff;">B</span>
<span class="t" style="left:834.0px;top:434.6px;font-size:11px;color:#fff;">16...</span>
<span class="t" style="left:876.47px;top:434.6px;font-size:11px;color:#fff;">80,00</span>
<span class="t" style="left:920.58px;top:434.6px;font-size:11px;color:#fff;">0,50</span>
<span class="t" style="left:969.58px;top:434.6px;font-size:11px;color:#fff;">3,00</span>
<span class="t" style="left:1006.84px;top:434.6px;font-size:11px;color:#fff;">479,80</span>
<span class="t" style="left:1047.5px;top:434.6px;font-size:11px;color:#fff;">Pozytywna</span>
<span class="t" style="left:443.5px;top:450.6px;font-size:11px;color:#a0a0a0;">3</span>
<span class="t" style="left:579.0px;top:450.6px;font-size:11px;color:#000;letter-spacing:-0.129px;">Gniazdo 10A/Z kołek 1</span>
<span class="t" style="left:730.0px;top:450.6px;font-size:11px;color:#000;">Bezp.</span>
<span class="t" style="left:794.0px;top:450.6px;font-size:11px;color:#000;">B</span>
<span class="t" style="left:834.0px;top:450.6px;font-size:11px;color:#000;">16...</span>
<span class="t" style="left:876.47px;top:450.6px;font-size:11px;color:#000;">80,00</span>
<span class="t" style="left:920.58px;top:450.6px;font-size:11px;color:#000;">0,45</span>
<span class="t" style="left:969.58px;top:450.6px;font-size:11px;color:#a0a0a0;">3,03</span>
<span class="t" style="left:1006.84px;top:450.6px;font-size:11px;color:#a0a0a0;">542,60</span>
<span class="t" style="left:1047.5px;top:450.6px;font-size:11px;color:#a0a0a0;">Pozytywna</span>
<span class="t" style="left:443.5px;top:466.6px;font-size:11px;color:#a0a0a0;">4</span>
<span class="t" style="left:579.0px;top:466.6px;font-size:11px;color:#000;letter-spacing:-0.129px;">Gniazdo 10A/Z kołek 1</span>
<span class="t" style="left:730.0px;top:466.6px;font-size:11px;color:#000;">Bezp.</span>
<span class="t" style="left:794.0px;top:466.6px;font-size:11px;color:#000;">B</span>
<span class="t" style="left:834.0px;top:466.6px;font-size:11px;color:#000;">16...</span>
<span class="t" style="left:876.47px;top:466.6px;font-size:11px;color:#000;">80,00</span>
<span class="t" style="left:920.58px;top:466.6px;font-size:11px;color:#000;">0,51</span>
<span class="t" style="left:969.58px;top:466.6px;font-size:11px;color:#a0a0a0;">3,03</span>
<span class="t" style="left:1006.84px;top:466.6px;font-size:11px;color:#a0a0a0;">475,49</span>
<span class="t" style="left:1047.5px;top:466.6px;font-size:11px;color:#a0a0a0;">Pozytywna</span>
<svg style="left:358.8px;top:746.8px" width="23" height="23" viewBox="0 0 23 23"><circle cx="7.949999999999999" cy="7.949999999999999" r="6.8999999999999995" fill="none" stroke="#fff" stroke-width="2.1"/><path d="M12.918 12.918 L21.95 21.95" stroke="#fff" stroke-width="2.415" stroke-linecap="butt"/></svg>
<div style="left:388px;top:743px;width:201px;height:30px;background:#b0afb3;border-radius:6px;"></div>
<span class="t" style="left:991px;top:750.5px;font-size:15.6px;color:#e6e6ea;letter-spacing:-0.107px;">1:1</span>
<div style="left:1024px;top:732px;width:54px;height:56px;background:#4e5262;"></div>
<svg style="left:1036px;top:743.5px" width="30" height="30" viewBox="0 0 30 30"><circle cx="10.6" cy="10.6" r="9.0" fill="none" stroke="#dcdcdc" stroke-width="3.2"/><path d="M17.08 17.08 L28.4 28.4" stroke="#dcdcdc" stroke-width="3.6799999999999997" stroke-linecap="butt"/><path d="M6.4 9 V6.4 H9 M12 6.4 H14.6 V9 M14.6 12 V14.6 H12 M9 14.6 H6.4 V12" fill="none" stroke="#dcdcdc" stroke-width="1.5"/></svg>
<div style="left:1084px;top:740px;width:40px;height:40px;background:#4d5161;"></div>
<svg style="left:1095.5px;top:750.5px" width="16" height="16" viewBox="0 0 16 16"><circle cx="5.55" cy="5.55" r="4.8" fill="none" stroke="#fff" stroke-width="1.5"/><path d="M9.006 9.006 L15.25 15.25" stroke="#fff" stroke-width="1.7249999999999999" stroke-linecap="butt"/><path d="M3 5.6 H8.2 M5.6 3 V8.2" stroke="#fff" stroke-width="1.4"/></svg>
<div style="left:1129px;top:755px;width:114px;height:5px;background:#19b1d1;"></div>
<div style="left:1136px;top:738px;width:1px;height:5px;background:#19b1d1;"></div>
<div style="left:1136px;top:772px;width:1px;height:4px;background:#19b1d1;"></div>
<div style="left:1160px;top:738px;width:1px;height:5px;background:#19b1d1;"></div>
<div style="left:1160px;top:772px;width:1px;height:4px;background:#19b1d1;"></div>
<div style="left:1185px;top:738px;width:1px;height:5px;background:#19b1d1;"></div>
<div style="left:1185px;top:772px;width:1px;height:4px;background:#19b1d1;"></div>
<div style="left:1209px;top:738px;width:1px;height:5px;background:#19b1d1;"></div>
<div style="left:1209px;top:772px;width:1px;height:4px;background:#19b1d1;"></div>
<div style="left:1233px;top:738px;width:1px;height:5px;background:#19b1d1;"></div>
<div style="left:1233px;top:772px;width:1px;height:4px;background:#19b1d1;"></div>
<div style="left:1201px;top:744px;width:17px;height:27px;background:#19b1d1;border-radius:2px;"></div>
<div style="left:0px;top:788px;width:1243px;height:1px;background:#38c0e4;"></div>
<svg style="left:1182px;top:791.5px" width="17" height="16" viewBox="0 0 17 16">
<rect x="0.9" y="2" width="15" height="13" rx="1.6" fill="none" stroke="#fff" stroke-width="1.8"/>
<rect x="0.9" y="2" width="15" height="3.4" fill="#fff"/>
<path d="M4.6 0.4 V3 M12 0.4 V3" stroke="#fff" stroke-width="2"/>
<circle cx="4.6" cy="3" r="0.8" fill="#1d2133"/><circle cx="12" cy="3" r="0.8" fill="#1d2133"/>
<text x="3.8" y="12.6" font-family="Liberation Sans, sans-serif" font-size="7.6" fill="#f2f2f2">31</text>
</svg>
<span class="t" style="left:1201px;top:793.6px;font-size:13.4px;color:#f4f4f6;">Brak zbliżających się terminów</span>
</div>
</body></html>
